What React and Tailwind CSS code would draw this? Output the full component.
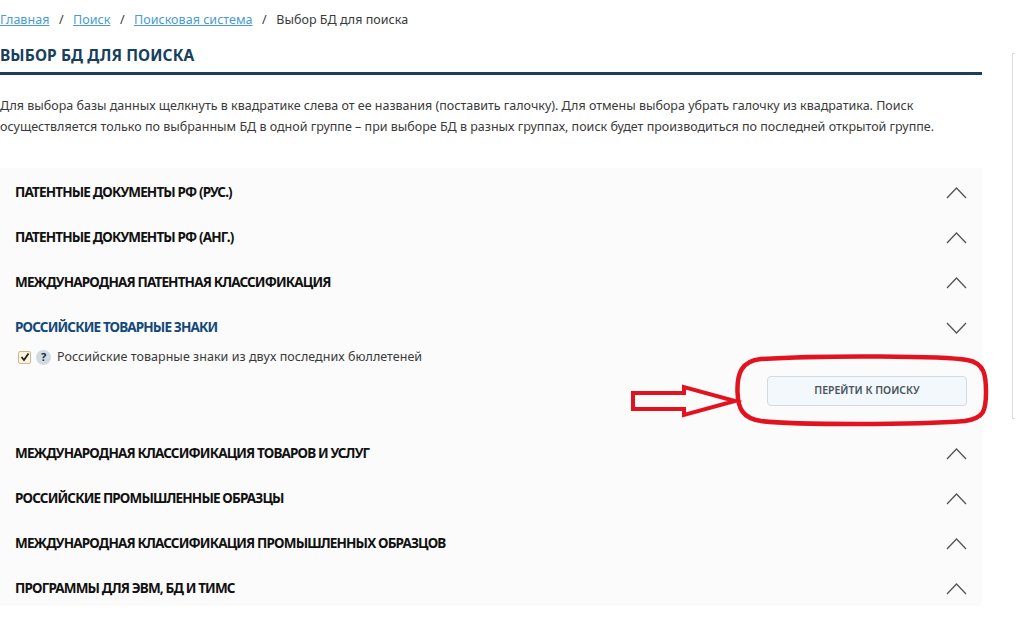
import React from "react";

const font = "font-['Noto_Sans','Open_Sans',sans-serif]";

function Row({ title, open = false }) {
  return (
    <div className="flex h-[45px] items-center justify-between pl-[15px] pr-[14px]">
      <span
        className={`text-[13.5px] font-bold tracking-[-0.85px] ${
          open ? "text-[#14497a]" : "text-[#111]"
        }`}
      >
        {title}
      </span>
      <svg width="24" height="14" viewBox="0 0 24 14" fill="none" stroke="#555" strokeWidth="1.3">
        {open ? <path d="M3 2 L12.5 12 L22 2" /> : <path d="M3 12 L12.5 2 L22 12" />}
      </svg>
    </div>
  );
}

function Markup() {
  return (
    <svg
      className="pointer-events-none absolute left-[625px] top-[350px]"
      width="370"
      height="80"
      viewBox="0 0 370 80"
      fill="none"
      stroke="#e2131f"
      strokeWidth="4.5"
    >
      <path d="M112.5 42 C112 24 116 11 136 9 C200 5 320 6 342 10 C360 13 361 26 361 42 C361 61 359 68 340 71 C290 75 170 75 136 71 C117 68 113 58 112.5 42 Z" />
      <path d="M8 43 H59 V37 L110 51 L59 65 V59 H8 Z" strokeWidth="4" />
    </svg>
  );
}

export default function App() {
  return (
    <div className={`relative h-[625px] w-[1015px] overflow-hidden bg-white ${font}`}>
      <div className="w-[982px]">
        <nav className="flex h-[40px] items-center gap-[9.5px] text-[12.5px] tracking-[0.03px] text-[#3a3a3a]">
          <a className="text-[#4a9bd4] underline">Главная</a>
          <span>/</span>
          <a className="text-[#4a9bd4] underline">Поиск</a>
          <span>/</span>
          <a className="text-[#4a9bd4] underline">Поисковая система</a>
          <span>/</span>
          <span>Выбор БД для поиска</span>
        </nav>
        <h1 className="flex h-[35px] items-center border-b-[3px] border-[#17405c] text-[15.5px] font-bold tracking-[0.1px] text-[#17405c]">
          ВЫБОР БД ДЛЯ ПОИСКА
        </h1>
        <p className="mt-[20px] text-[12.5px] leading-[21px] text-[#3a3a3a]">
          Для выбора базы данных щелкнуть в квадратике слева от ее названия (поставить галочку). Для отмены выбора убрать галочку из квадратика. Поиск осуществляется только по выбранным БД в одной группе – при выборе БД в разных группах, поиск будет производиться по последней открытой группе.
        </p>
        <div className="mt-[31px] h-[438px] bg-[#fbfbfb] pt-[2px]">
          <Row title="ПАТЕНТНЫЕ ДОКУМЕНТЫ РФ (РУС.)" />
          <Row title="ПАТЕНТНЫЕ ДОКУМЕНТЫ РФ (АНГ.)" />
          <Row title="МЕЖДУНАРОДНАЯ ПАТЕНТНАЯ КЛАССИФИКАЦИЯ" />
          <Row title="РОССИЙСКИЕ ТОВАРНЫЕ ЗНАКИ" open />
          <div className="h-[81px]">
            <div className="flex h-[14px] items-center pl-[18px]">
              <span className="flex h-[13px] w-[13px] items-center justify-center rounded-[2px] border border-[#c9b98f] bg-[#fbf3dc]">
                <svg width="10" height="10" viewBox="0 0 10 10" fill="none" stroke="#222" strokeWidth="1.8">
                  <path d="M1.5 5 L4 8 L8.5 1.5" />
                </svg>
              </span>
              <span className="ml-[5px] flex h-[15px] w-[15px] items-center justify-center rounded-full bg-[#cfdae3] text-[11px] font-bold text-[#1a2a3a]">
                ?
              </span>
              <span className="ml-[6px] text-[12.5px] tracking-[0.04px] text-[#3a3a3a]">
                Российские товарные знаки из двух последних бюллетеней
              </span>
            </div>
            <div className="mt-[12px] flex justify-end pr-[15px]">
              <button className="h-[30px] w-[200px] rounded-[4px] border border-[#d3dae2] bg-[#f3f8fc] text-[10.5px] font-semibold text-[#4a5560]">
                ПЕРЕЙТИ К ПОИСКУ
              </button>
            </div>
          </div>
          <Row title="МЕЖДУНАРОДНАЯ КЛАССИФИКАЦИЯ ТОВАРОВ И УСЛУГ" />
          <Row title="РОССИЙСКИЕ ПРОМЫШЛЕННЫЕ ОБРАЗЦЫ" />
          <Row title="МЕЖДУНАРОДНАЯ КЛАССИФИКАЦИЯ ПРОМЫШЛЕННЫХ ОБРАЗЦОВ" />
          <Row title="ПРОГРАММЫ ДЛЯ ЭВМ, БД И ТИМС" />
        </div>
      </div>
      <div className="absolute left-[1012px] top-[53px] h-[366px] w-[3px] border-l border-t border-b border-[#ddd]" />
      <Markup />
    </div>
  );
}
